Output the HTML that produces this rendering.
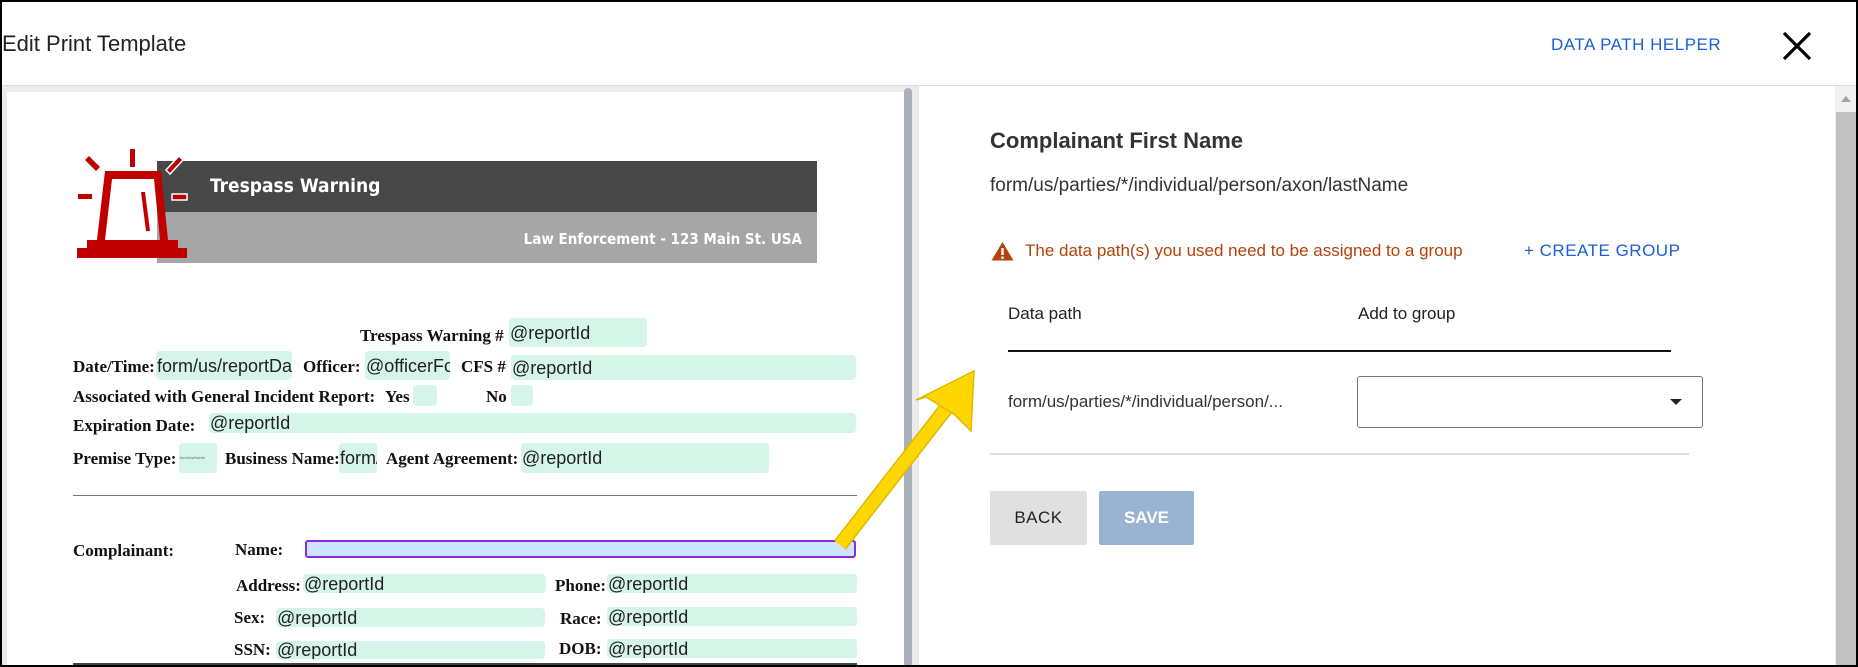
<!DOCTYPE html>
<html><head><meta charset="utf-8"><style>
*{margin:0;padding:0;box-sizing:border-box}
body{width:1858px;height:667px;background:#fff;position:relative;overflow:hidden;font-family:"Liberation Sans",sans-serif}
.a{position:absolute;white-space:nowrap}
.lb{font-family:"Liberation Serif",serif;font-weight:bold;font-size:17px;color:#111;position:absolute;white-space:nowrap;transform:translateY(-50%)}
.f{position:absolute;background:#d5f5e9;border-radius:4px;font-size:18px;color:#222;overflow:hidden;white-space:nowrap;line-height:1;display:flex;align-items:center;padding-left:1px}
</style></head><body>
<div class="a" style="left:0;top:0;width:1858px;height:667px;border:2px solid #000;z-index:50;pointer-events:none"></div>
<div class="a" style="left:2px;top:31px;font-size:22px;color:#222">Edit Print Template</div>
<div class="a" style="left:1551px;top:35px;font-size:17px;color:#1a5fd6;letter-spacing:0.5px">DATA PATH HELPER</div>
<svg class="a" style="left:1781px;top:31px" width="32" height="30"><path d="M3 2 L29 28 M29 2 L3 28" stroke="#000" stroke-width="3.2"/></svg>
<div class="a" style="left:2px;top:85px;width:1854px;height:1px;background:#ddd"></div>
<div class="a" style="left:2px;top:86px;width:916px;height:580px;background:#ececec"></div>
<div class="a" style="left:7px;top:92px;width:897px;height:575px;background:#fff"></div>
<div class="a" style="left:904px;top:88px;width:8px;height:579px;background:#a8b1ba;border-radius:4px"></div>
<div class="a" style="left:918px;top:86px;width:1px;height:581px;background:#e4e4e4"></div>
<div class="a" style="left:1835px;top:86px;width:21px;height:581px;background:#f1f1f1"></div>
<div class="a" style="left:1836px;top:112px;width:20px;height:555px;background:#c1c1c1"></div>
<div class="a" style="left:1841px;top:96px;width:0;height:0;border-left:5px solid transparent;border-right:5px solid transparent;border-bottom:6px solid #a3a3a3"></div>
<!-- banner -->
<div class="a" style="left:157px;top:161px;width:660px;height:51px;background:#474747"></div>
<div class="a" style="left:157px;top:212px;width:660px;height:51px;background:#a6a6a6"></div>
<div class="a" style="left:210px;top:175px;font-size:19px;font-weight:bold;color:#fff;font-family:'DejaVu Sans Condensed','DejaVu Sans',sans-serif">Trespass Warning</div>
<div class="a" style="left:510px;top:230px;width:292px;text-align:right;font-size:15px;color:#fff;font-weight:bold;font-family:'DejaVu Sans Condensed','DejaVu Sans',sans-serif">Law Enforcement - 123 Main St. USA</div>
<svg class="a" style="left:70px;top:145px" width="125" height="118">
<g transform="translate(-70,-145)" fill="#c00000" stroke="none">
<rect x="77" y="248" width="110" height="10"/>
<rect x="87" y="240" width="91" height="9"/>
<path d="M105 171 L161 171 L168 240 L97 240 Z M112 179 L105 240 L160 240 L154 179 Z" fill-rule="evenodd"/>
<rect x="130" y="149" width="5" height="18"/>
<path d="M85 160 L89 156 L100 167 L96 171 Z"/>
<path d="M179 156 L183 160 L170 174 L166 170 Z" stroke="#fff" stroke-width="1.5"/>
<rect x="78" y="194" width="14" height="5"/>
<rect x="172" y="194" width="15" height="6" stroke="#fff" stroke-width="1.5"/>
<path d="M141 192 L145 192 L150 231 L146 231 Z"/>
</g></svg>
<!-- form -->
<div class="lb" style="left:360px;top:336px">Trespass Warning #</div>
<div class="f" style="left:509px;top:318px;width:138px;height:29px">@reportId</div>
<div class="lb" style="left:73px;top:367px">Date/Time:</div>
<div class="f" style="left:156px;top:351px;width:136px;height:29px">form/us/reportDat</div>
<div class="lb" style="left:303px;top:367px">Officer:</div>
<div class="f" style="left:365px;top:351px;width:85px;height:29px">@officerFc</div>
<div class="lb" style="left:461px;top:367px">CFS #</div>
<div class="f" style="left:511px;top:355px;width:345px;height:25px">@reportId</div>
<div class="lb" style="left:73px;top:397px">Associated with General Incident Report:</div>
<div class="lb" style="left:385px;top:397px">Yes</div>
<div class="f" style="left:413px;top:385px;width:24px;height:21px"></div>
<div class="lb" style="left:486px;top:397px">No</div>
<div class="f" style="left:511px;top:385px;width:22px;height:21px"></div>
<div class="lb" style="left:73px;top:426px">Expiration Date:</div>
<div class="f" style="left:209px;top:413px;width:647px;height:20px">@reportId</div>
<div class="lb" style="left:73px;top:459px">Premise Type:</div>
<div class="f" style="left:179px;top:443px;width:38px;height:30px;font-size:4px;color:#666">form/us/incide</div>
<div class="lb" style="left:225px;top:459px">Business Name:</div>
<div class="f" style="left:339px;top:443px;width:38px;height:30px">form/</div>
<div class="lb" style="left:386px;top:459px">Agent Agreement:</div>
<div class="f" style="left:521px;top:443px;width:248px;height:30px">@reportId</div>
<div class="a" style="left:73px;top:495px;width:784px;height:1px;background:#777"></div>
<div class="lb" style="left:73px;top:551px">Complainant:</div>
<div class="lb" style="left:235px;top:550px">Name:</div>
<div class="a" style="left:305px;top:540px;width:551px;height:18px;background:#cce5ff;border:2px solid #8a2be2;border-radius:3px"></div>
<div class="lb" style="left:236px;top:586px">Address:</div>
<div class="f" style="left:303px;top:574px;width:243px;height:19px">@reportId</div>
<div class="lb" style="left:555px;top:586px">Phone:</div>
<div class="f" style="left:607px;top:574px;width:250px;height:19px">@reportId</div>
<div class="lb" style="left:234px;top:618px">Sex:</div>
<div class="f" style="left:276px;top:608px;width:269px;height:19px">@reportId</div>
<div class="lb" style="left:560px;top:619px">Race:</div>
<div class="f" style="left:607px;top:607px;width:250px;height:19px">@reportId</div>
<div class="lb" style="left:234px;top:650px">SSN:</div>
<div class="f" style="left:276px;top:641px;width:269px;height:18px">@reportId</div>
<div class="lb" style="left:559px;top:649px">DOB:</div>
<div class="f" style="left:607px;top:639px;width:250px;height:19px">@reportId</div>
<div class="a" style="left:73px;top:663px;width:784px;height:2px;background:#444"></div>
<!-- right -->
<div class="a" style="left:990px;top:128px;font-size:22px;color:#222;font-weight:bold;-webkit-text-stroke:0;opacity:0.92">Complainant First Name</div>
<div class="a" style="left:990px;top:175px;font-size:19px;color:#333">form/us/parties/*/individual/person/axon/lastName</div>
<svg class="a" style="left:991px;top:241px" width="23" height="20"><path d="M11.5 1 L22.5 19.5 L0.5 19.5 Z" fill="#b5410b"/><rect x="10.3" y="7" width="2.4" height="7" fill="#fff"/><rect x="10.3" y="15.5" width="2.4" height="2.4" fill="#fff"/></svg>
<div class="a" style="left:1025px;top:241px;font-size:17px;color:#b5410b">The data path(s) you used need to be assigned to a group</div>
<div class="a" style="left:1524px;top:241px;font-size:17px;color:#1a5fd6;letter-spacing:0.5px">+ CREATE GROUP</div>
<div class="a" style="left:1008px;top:304px;font-size:17px;color:#222">Data path</div>
<div class="a" style="left:1358px;top:304px;font-size:17px;color:#222">Add to group</div>
<div class="a" style="left:1008px;top:350px;width:663px;height:2px;background:#111"></div>
<div class="a" style="left:1008px;top:392px;font-size:17px;color:#333">form/us/parties/*/individual/person/...</div>
<div class="a" style="left:1357px;top:376px;width:346px;height:52px;border:1px solid #777;border-radius:3px"></div>
<div class="a" style="left:1670px;top:399px;width:0;height:0;border-left:6px solid transparent;border-right:6px solid transparent;border-top:6px solid #222"></div>
<div class="a" style="left:990px;top:453px;width:699px;height:2px;background:#e0e0e0"></div>
<div class="a" style="left:990px;top:491px;width:97px;height:54px;background:#e0e0e0;border-radius:2px;font-size:17px;color:#222;text-align:center;line-height:54px;letter-spacing:0.5px">BACK</div>
<div class="a" style="left:1099px;top:491px;width:95px;height:54px;background:#9ab3d3;border-radius:2px;font-size:17px;color:#fff;font-weight:bold;text-align:center;line-height:54px">SAVE</div>
<!-- arrow -->
<svg class="a" style="left:820px;top:360px;z-index:40" width="170" height="200">
<g transform="translate(-820,-360)">
<path d="M840 545 L948 406" stroke="#e0b800" stroke-width="15" stroke-linecap="butt"/>
<path d="M840 545 L948 406" stroke="#ffd700" stroke-width="12"/>
<path d="M974 371 L971 431 L954 414 L926 397 L916 400 Z" fill="#ffd700" stroke="#e0b800" stroke-width="1.5"/>
</g></svg>
</body></html>
